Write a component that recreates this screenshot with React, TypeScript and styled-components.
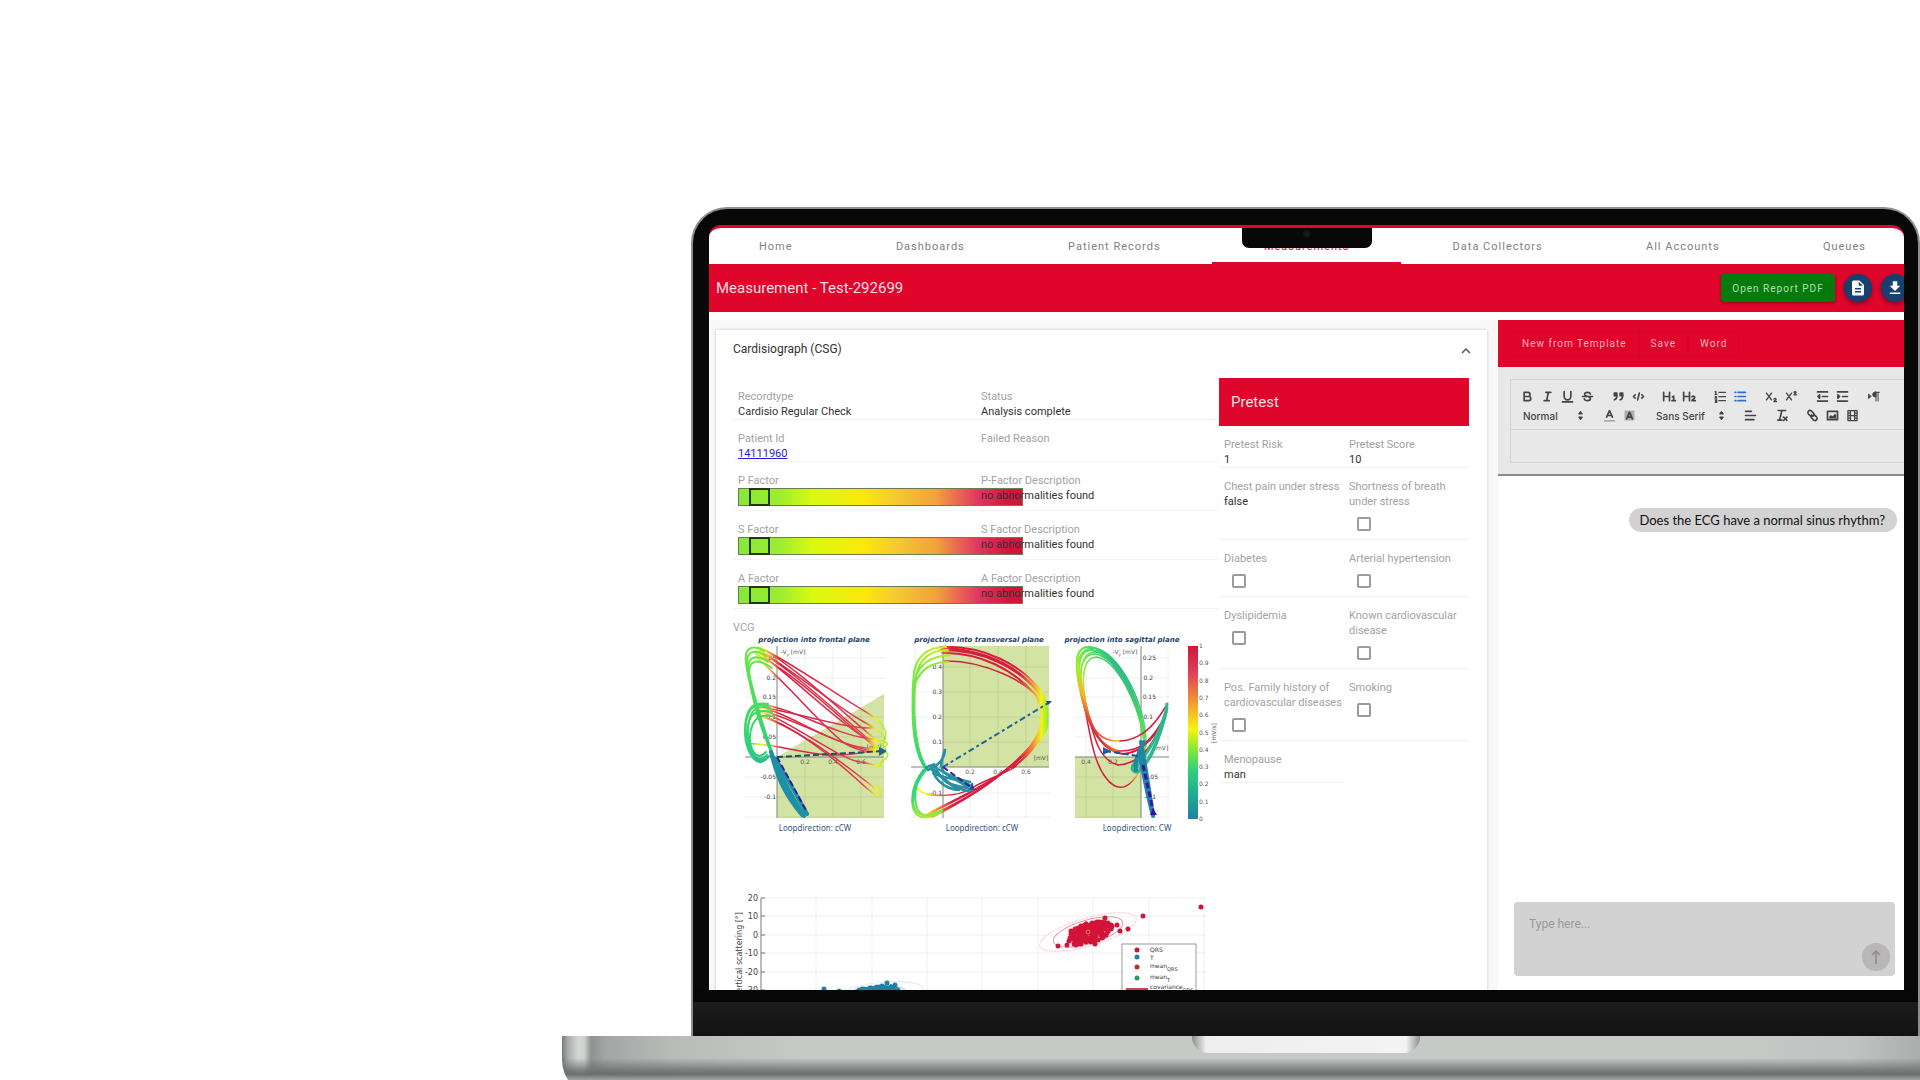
import React from 'react';
import styled, { createGlobalStyle } from 'styled-components';

interface IField {
  label: string;
  value?: string;
  link?: boolean;
  check?: boolean;
}

const RED = '#df052b';
const LOOP_COLORS = ['#d81e3f', '#e04f6a', '#f08a3c', '#f6f410', '#6fe83a', '#2fd07c', '#1f8fa0'];

const GlobalStyle = createGlobalStyle`
  *, *::before, *::after {
    box-sizing: border-box;
  }

  body {
    margin: 0;
    background: #fff;
    font-family: Roboto, "Noto Sans", sans-serif;
    color: #333;
  }

  button, select, textarea, input {
    font-family: inherit;
    margin: 0;
  }
`;

/* laptop */

const Page = styled.main`
  display: flex;
  flex-direction: column;
  height: 100vh;
  padding: 207px 0 0 562px;
  overflow: hidden;
`;

const Lid = styled.div`
  flex: 1;
  min-height: 0;
  display: flex;
  flex-direction: column;
  margin-left: 129px;
  padding: 16px 14px 0 16px;
  background: #080808;
  border: 2px solid #8d8f8e;
  border-bottom: 0;
  border-radius: 36px 36px 0 0;
`;

const Screen = styled.div`
  flex: 1;
  min-height: 0;
  position: relative;
  display: flex;
  flex-direction: column;
  overflow: hidden;
  background: #fff;
  border-top: 3px solid ${RED};
  border-radius: 12px 12px 0 0;
`;

const Notch = styled.div`
  position: absolute;
  top: -3px;
  left: 50%;
  width: 130px;
  height: 23px;
  margin-left: -65px;
  display: flex;
  align-items: center;
  justify-content: center;
  padding-bottom: 6px;
  background: #080808;
  border-radius: 0 0 7px 7px;

  &::after {
    content: '';
    width: 8px;
    height: 8px;
    border: 2px solid #141414;
    background: #1d1d1d;
    border-radius: 50%;
  }
`;

const Chin = styled.div`
  height: 46px;
  margin: 0 -14px 0 -16px;
  border-top: 12px solid #070707;
  background: linear-gradient(#1c1c1c, #131313);
`;

const Base = styled.div`
  flex: none;
  height: 60px;
  margin-bottom: -16px;
  display: flex;
  justify-content: center;
  padding-left: 130px;
  border-radius: 0 0 0 36px;
  background:
    linear-gradient(#fff0 22px, #6b6e6dcc 34px, #6b6e6d 38px, #a3a3a3 44px),
    linear-gradient(90deg, #777a78 0, #a9acaa 6px, #d5d7d5 16px, #d0d2d0 22px, #8f9290 29px, #a3a6a4 44px, #b9bbb9 110px, #c7c9c7 240px, #c7c9c7 1180px, #bfc3c1 1290px, #a9adab 1360px);
`;

const Groove = styled.div`
  width: 228px;
  height: 17px;
  border-radius: 0 0 16px 16px;
  background: linear-gradient(90deg, #8d8f8e, #eee 14px, #f3f3f3 214px, #8d8f8e);
`;

/* application bars */

const Nav = styled.nav`
  flex: none;
  display: flex;
  justify-content: space-between;
  padding: 0 38px 0 50px;
  height: 36px;
`;

const NavLink = styled.a<{ $active?: boolean }>`
  position: relative;
  height: 36px;
  line-height: 38px;
  font-size: 11px;
  letter-spacing: 1px;
  text-decoration: none;
  color: ${p => (p.$active ? RED : '#808080')};

  &::after {
    content: '';
    display: ${p => (p.$active ? 'block' : 'none')};
    position: absolute;
    left: -52px;
    right: -52px;
    bottom: 0;
    height: 2px;
    background: ${RED};
  }
`;

const TitleBar = styled.header`
  flex: none;
  display: flex;
  align-items: center;
  height: 48px;
  padding-left: 7px;
  color: #fff;
  background: ${RED};
`;

const Title = styled.h1`
  flex: 1;
  margin: 0;
  font-size: 15px;
  font-weight: 400;
  color: #fbdfe4;
`;

const Actions = styled.div`
  display: flex;
  align-items: center;
  gap: 9px;
  margin-right: -5px;
`;

const ReportButton = styled.button`
  width: 114px;
  height: 28px;
  padding: 0;
  border: 0;
  border-radius: 3px;
  background: #067a0c;
  color: #b5e0b0;
  font-size: 10px;
  letter-spacing: 1px;
  box-shadow: 0 1px 3px #0006;
`;

const RoundButton = styled.button`
  width: 28px;
  height: 28px;
  padding: 5px;
  border: 0;
  border-radius: 50%;
  background: #17406f;
  color: #fff;
  box-shadow: 0 2px 4px #0006;

  svg {
    display: block;
    width: 18px;
    height: 18px;
  }
`;

const Columns = styled.div`
  flex: 1;
  min-height: 0;
  display: grid;
  grid-template-columns: 789fr 406fr;
  padding-top: 8px;
`;

/* measurement card */

const LeftPane = styled.div`
  min-height: 0;
  padding: 10px 11px 0 7px;
  background: #f8f8f8;
`;

const Card = styled.section`
  height: 100%;
  padding: 0 18px 0 17px;
  background: #fff;
  box-shadow: 0 0 3px #0003;
`;

const CardHeader = styled.div`
  display: flex;
  align-items: center;
  justify-content: space-between;
  height: 48px;
  padding-bottom: 10px;

  h2 {
    margin: 0;
    font-size: 12px;
    font-weight: 400;
  }
`;

const Toggle = styled.button`
  width: 12px;
  height: 12px;
  margin-top: 4px;
  margin-right: -3px;
  padding: 0;
  border: 0;
  background: none;
  color: #555;

  svg {
    display: block;
  }
`;

const CardBody = styled.div`
  display: grid;
  grid-template-columns: 486fr 250fr;
`;

const Row = styled.div<{ $half?: boolean }>`
  display: grid;
  grid-template-columns: ${p => (p.$half ? '1fr' : '1fr 1fr')};
  width: ${p => (p.$half ? '50%' : 'auto')};
  border-bottom: 1px solid #f3f3f3;
`;

const Cell = styled.div<{ $tall?: boolean }>`
  min-width: 0;
  height: ${p => (p.$tall ? '48px' : 'auto')};
  padding: 11px 0 0 5px;
  font-size: 11px;
  line-height: 15px;
`;

const Label = styled.label`
  display: block;
  min-height: 15px;
  color: #a2a2a2;
`;

const Value = styled.div`
  position: relative;
  min-height: 15px;
  color: #333;

  a {
    color: #2222dd;
  }
`;

const CheckBox = styled.input`
  display: block;
  appearance: none;
  width: 14px;
  height: 14px;
  && {
    margin: 8px;
  }
  border: 2px solid #9b9b9b;
  border-radius: 2px;
  background: #fff;
`;

const Scale = styled.div`
  width: 285px;
  height: 18px;
  padding-left: 10px;
  border: 1px solid #6f7a4c;
  background: linear-gradient(90deg, #86e83c 0, #9bec30 14%, #d8fa12 26%, #fae80c 44%, #f6c832 56%, #f0a13c 70%, #ea6a54 77%, #dc3560 85%, #d3143a 96%);
`;

const Marker = styled.div`
  width: 21px;
  height: 18px;
  margin-top: -1px;
  border: 2px solid #23380f;
`;

const Caption = styled.div`
  padding-top: 11px;
  font-size: 11px;
  line-height: 15px;
  color: #a2a2a2;
`;

const Figure = styled.svg`
  display: block;
  width: 100%;
  overflow: visible;
  font-family: "DejaVu Sans", sans-serif;
`;

const PretestTitle = styled.h3`
  margin: 0;
  padding-left: 12px;
  line-height: 48px;
  font-size: 15px;
  font-weight: 400;
  color: #fbdfe4;
  background: ${RED};
`;

/* report editor and chat */

const RightPane = styled.div`
  min-height: 0;
  min-width: 0;
  display: flex;
  flex-direction: column;
`;

const EditorBar = styled.div`
  flex: none;
  display: flex;
  align-items: center;
  height: 47px;
  padding-left: 12px;
  background: ${RED};
`;

const BarButton = styled.button`
  height: 26px;
  padding: 0 11px;
  border: 1px solid #d9042a;
  background: none;
  color: #f9b3bf;
  font-size: 10px;
  letter-spacing: 1px;
`;

const EditorArea = styled.div`
  flex: none;
  padding: 12px 0 11px 12px;
  background: #e8e8e8;
  border-bottom: 2px solid #8b8b8b;
`;

const EditorBox = styled.div`
  border: 1px solid #d2d4d5;
  border-right: 0;
`;

const Tools = styled.div`
  height: 50px;
  padding: 7px 0 0 6px;
  border-bottom: 1px solid #d2d4d5;
`;

const ToolLine = styled.div`
  display: flex;
  gap: 11px;
  height: 19px;
`;

const ToolGroup = styled.div`
  display: flex;
  align-items: center;
`;

const Tool = styled.button<{ $on?: boolean }>`
  width: 20px;
  height: 19px;
  padding: 2px 3px;
  border: 0;
  background: none;
  color: ${p => (p.$on ? '#2a6fd0' : '#444')};

  svg {
    display: block;
    width: 15px;
    height: 15px;
  }
`;

const PickerBox = styled.label<{ $width: number }>`
  display: flex;
  align-items: center;
  width: ${p => p.$width}px;
  padding-left: 6px;
  color: #444;

  svg {
    width: 15px;
    height: 15px;
  }
`;

const Picker = styled.select`
  flex: 1;
  min-width: 0;
  appearance: none;
  padding: 0;
  border: 0;
  background: none;
  color: #444;
  font-family: Inter, sans-serif;
  font-size: 10px;
  font-weight: 500;
`;

const EditorText = styled.textarea`
  display: block;
  width: 100%;
  height: 32px;
  padding: 6px;
  border: 0;
  resize: none;
  background: none;
`;

const Chat = styled.div`
  flex: 1;
  min-height: 0;
  display: flex;
  flex-direction: column;
  justify-content: space-between;
  padding: 32px 9px 14px 16px;
`;

const Bubble = styled.p`
  align-self: flex-end;
  margin: 0 -2px 0 0;
  padding: 0 12px 0 10px;
  border-radius: 12px;
  line-height: 24px;
  font-family: Lato, sans-serif;
  font-size: 13px;
  color: #111;
  background: #d2d2d2;
`;

const Prompt = styled.div`
  display: flex;
  align-items: flex-end;
  height: 74px;
  padding: 5px;
  border-radius: 4px;
  background: #d2d2d2;
`;

const PromptText = styled.textarea`
  flex: 1;
  align-self: stretch;
  padding: 10px;
  border: 0;
  resize: none;
  background: none;
  font-size: 12px;

  &::placeholder {
    color: #999;
  }
`;

const SendButton = styled.button`
  width: 28px;
  height: 28px;
  padding: 6px;
  border: 0;
  border-radius: 50%;
  background: #b8b6b6;
  color: #8d8b8b;

  svg {
    display: block;
  }
`;

const navItems = ['Home', 'Dashboards', 'Patient Records', 'Measurements', 'Data Collectors', 'All Accounts', 'Queues'];

const recordRows: IField[][] = [
  [{ label: 'Recordtype', value: 'Cardisio Regular Check' }, { label: 'Status', value: 'Analysis complete' }],
  [{ label: 'Patient Id', value: '14111960', link: true }, { label: 'Failed Reason' }],
];

const factorRows = [
  ['P Factor', 'P-Factor Description'],
  ['S Factor', 'S Factor Description'],
  ['A Factor', 'A Factor Description'],
];

const pretestRows: IField[][] = [
  [{ label: 'Pretest Risk', value: '1' }, { label: 'Pretest Score', value: '10' }],
  [{ label: 'Chest pain under stress', value: 'false' }, { label: 'Shortness of breath under stress', check: true }],
  [{ label: 'Diabetes', check: true }, { label: 'Arterial hypertension', check: true }],
  [{ label: 'Dyslipidemia', check: true }, { label: 'Known cardiovascular disease', check: true }],
  [{ label: 'Pos. Family history of cardiovascular diseases', check: true }, { label: 'Smoking', check: true }],
  [{ label: 'Menopause', value: 'man' }],
];

const Field = ({ label, value, link, check }: IField) => {
  const id = label.toLowerCase().replace(/\W+/g, '-');

  return (
    <Cell>
      <Label as={check ? 'label' : 'div'} {...(check ? { htmlFor: id } : {})}>{label}</Label>
      {check
        ? <CheckBox type="checkbox" id={id} />
        : <Value>{link ? <a href="#patient">{value}</a> : value}</Value>}
    </Cell>
  );
};

/* toolbar glyphs on an 18 unit grid */

const glyphs: { [key: string]: React.ReactNode } = {
  bold: <path d="M5 4h4.500a2.500 2.500 0 0 1 0 5H5zM5 9h5.500a2.500 2.500 0 0 1 0 5H5z" />,
  italic: <path d="M7 4h6M5 14h6M8 14l2-10" />,
  underline: <path d="M5 3v6a4 4 0 0 0 8 0V3M3 15.500h12" />,
  strike: <path d="M12.500 6C12 4.500 10.500 4 9 4 7 4 5.500 5 5.500 6.500 5.500 9 12.500 8.500 12.500 11.500 12.500 13 11 14 9 14s-3.500-.8-3.800-2.200M3 9h12" />,
  quote: (
    <>
      <path d="M4 5h3v3H4zM11 5h3v3h-3z" fill="currentColor" />
      <path d="M7 8c0 4-3 5-3 5M14 8c0 4-3 5-3 5" />
    </>
  ),
  code: <path d="M5 7L3 9l2 2M13 7l2 2-2 2M10 5L8 13" />,
  h1: <path d="M2 4v10M9 4v10M2 9h7M12.500 9.500L14 8.500V14M12 14h4" />,
  h2: <path d="M2 4v10M9 4v10M2 9h7M12 9.500c.8-1.500 3.500-1 3.300.7C15 12 12 12.500 12 14h4" />,
  ordered: <path d="M7 4h8M7 9h8M7 14h8M2.500 3.500l1-.5v3.500M2.500 6.500h2.200M2.500 9h1.800l-1.800 2h2M2.500 13h2v3h-2M3 14.500h1.500" strokeWidth="1.500" />,
  bullet: <path d="M6 4h9M6 9h9M6 14h9M2.500 4h1M2.500 9h1M2.500 14h1" />,
  sub: <path d="M3 5l6 8M9 5l-6 8M12 12c.5-1 2.500-1 2.500.3 0 1-2.500 1.500-2.500 2.700h3" strokeWidth="1.700" />,
  sup: <path d="M3 5l6 8M9 5l-6 8M12 4c.5-1 2.500-1 2.500.3 0 1-2.500 1.500-2.500 2.700h3" strokeWidth="1.700" />,
  outdent: <path d="M3 3.500h12M3 14.500h12M9 9h6M5.500 7v4L3.500 9z" />,
  indent: <path d="M3 3.500h12M3 14.500h12M9 9h6M3.500 7v4l2-2z" />,
  rtl: (
    <>
      <path d="M3 6.500v5L6 9zM11 3.500a3 3 0 0 0 0 6h1v-6z" fill="currentColor" strokeWidth="1" />
      <path d="M11 4h5M12 4v10.500M14.500 4v10.500" strokeWidth="1.200" />
    </>
  ),
  color: (
    <>
      <path d="M5.500 11L9 3l3.500 8M6.500 9h5" />
      <path d="M3 15.500h12" opacity=".5" strokeWidth="1.500" />
    </>
  ),
  background: (
    <>
      <path d="M3 3h12v12H3z" fill="currentColor" stroke="none" opacity=".35" />
      <path d="M5.500 13L9 5l3.500 8M6.500 11h5" />
    </>
  ),
  align: <path d="M3 4h7M3 9h12M3 14h10" />,
  clean: <path d="M5 3h9M9.500 3L7 13M4.500 14.500h5M11.500 11l4 4M15.500 11l-4 4" />,
  link: <path d="M8 10.500l3-3M6.500 9.500L4 7a2.500 2.500 0 0 1 3.500-3.500l2.500 2.500a2.500 2.500 0 0 1 0 3.500M11.500 8.500L14 11a2.500 2.500 0 0 1-3.500 3.500L8 12a2.500 2.500 0 0 1 0-3.500" />,
  image: (
    <>
      <path d="M3 4h12v10H3z" />
      <path d="M5 12.500v-2l2-2 2 1.500 3-3 1.500 1.500v4z" fill="currentColor" stroke="none" />
    </>
  ),
  video: <path d="M3.500 3h11v12h-11zM6.500 3v12M11.500 3v12M6.500 9h5M3.500 6h3M3.500 9h3M3.500 12h3M11.500 6h3M11.500 9h3M11.500 12h3" strokeWidth="1.500" />,
  arrows: <path d="M7 7l2-2.500L11 7zM7 11l2 2.500L11 11z" fill="currentColor" strokeWidth="1.500" />,
};

const Glyph = ({ name }: { name: string }) => (
  <svg viewBox="0 0 18 18" fill="none" stroke="currentColor" strokeWidth="2" strokeLinecap="round" strokeLinejoin="round">
    {glyphs[name]}
  </svg>
);

const Group = ({ names }: { names: string[] }) => (
  <ToolGroup>
    {names.map(name => (
      <Tool key={name} type="button" aria-label={name} $on={name === 'bullet'}><Glyph name={name} /></Tool>
    ))}
  </ToolGroup>
);

/* vector cardiogram: drawn in one shared coordinate space */

const frontalLeft = [
  'M775 762C766 740 748 685 746 662C744 646 754 645 764 651',
  'M774 760C764 735 750 690 747 664C746 650 756 649 766 656',
  'M777 764C765 735 752 690 748 668C748 655 758 655 768 662',
  'M775 760C764 738 751 700 749 672C749 660 758 658 772 668',
];

const frontalRight = [
  'M758 647C775 652 840 697 866 712S886 738 883 745',
  'M760 648C790 662 842 712 868 733S884 748 882 752',
  'M758 651C790 668 840 715 866 737S884 750 881 756',
  'M756 654C792 672 834 712 862 736S882 752 878 752',
  'M760 650C800 676 838 708 864 722S884 738 884 744',
  'M758 652C796 680 842 726 872 742',
  'M756 657C788 684 830 735 846 744S874 752 882 752',
];

const midLeft = [
  'M768 757C757 772 744 750 745 728C746 706 754 702 768 704',
  'M767 755C755 768 747 745 748 728C750 708 757 705 770 708',
  'M769 756C758 770 746 748 747 733C748 712 757 709 772 712',
  'M766 752C755 764 749 745 750 735C752 718 760 714 772 716',
  'M767 758C752 768 744 742 746 722C749 706 756 703 768 706',
];

const midRight = [
  'M756 704C790 706 830 733 866 738S882 745 880 752',
  'M756 706C788 712 830 744 866 748S884 758 880 764',
  'M756 709C790 716 834 744 872 751',
  'M758 711C790 720 836 758 860 762S882 768 880 764',
  'M756 714C790 722 836 760 862 784S880 788 878 788',
  'M760 716C792 726 828 752 858 775S876 792 879 786',
  'M748 744C770 742 800 754 832 755S872 748 882 750',
  'M760 707C795 712 840 728 872 728',
];

const transversalLeft = [
  'M927 769C912 752 911 700 914 672C918 652 932 647 946 647',
  'M926 768C913 750 913 700 916 676C920 656 934 650 948 650',
  'M928 770C914 752 912 704 915 680C919 662 934 656 950 655',
  'M925 768C911 748 911 706 915 684C921 668 932 662 948 662',
  'M925 769C909 785 908 815 922 817C928 818 932 817 940 813',
  'M923 770C912 788 913 812 924 815C930 816 936 813 942 810',
  'M926 770C914 784 908 806 919 814C926 818 934 815 942 811',
];

const transversalRight = [
  'M940 647C985 645 1022 666 1040 690C1056 716 1046 738 1018 760C990 785 965 800 930 816',
  'M942 649C986 649 1020 670 1039 692C1054 718 1044 736 1014 763C988 786 962 802 932 817',
  'M940 650C985 650 1018 668 1038 692C1052 718 1042 740 1010 767C985 786 960 798 930 813',
  'M942 653C980 652 1014 670 1036 695C1050 722 1038 744 1008 769C980 789 958 798 928 814',
  'M944 648C992 650 1024 672 1042 696C1054 720 1042 746 1012 768',
];

const transversalThin = [
  'M944 661C980 660 1030 680 1043 705S1040 740 1024 756',
  'M917 788C926 800 960 796 972 788S1010 772 1016 766',
];

const sagittalUpper = [
  'M1145 750C1146 712 1120 650 1090 647C1074 646 1074 665 1082 698C1090 730 1100 746 1118 751',
  'M1146 746C1143 708 1118 653 1092 650C1077 650 1076 670 1085 702C1094 738 1104 750 1122 754',
  'M1144 742C1140 705 1118 657 1095 654C1080 654 1076 678 1084 706C1092 732 1102 742 1120 741',
  'M1143 736C1138 702 1116 660 1097 657C1082 657 1080 682 1088 712',
  'M1146 742C1146 705 1118 648 1092 648C1074 650 1075 672 1084 705C1090 730 1092 760 1106 778C1120 796 1132 785 1140 770',
  'M1145 745C1142 710 1116 656 1096 652C1079 652 1078 676 1086 706C1094 736 1098 760 1118 765',
];

const sagittalLower = [
  'M1120 741C1138 740 1152 730 1166 706',
  'M1118 751C1140 752 1152 742 1167 712',
  'M1122 754C1146 752 1158 732 1166 716',
  'M1118 765C1142 764 1156 742 1167 709',
  'M1116 752C1138 760 1150 738 1164 722',
];

const Stops = ({ colors }: { colors: [number, string][] }) => (
  <>
    {colors.map(([at, color]) => <stop key={at} offset={at} stopColor={color} />)}
  </>
);

const Loops = ({ paths, stroke, width = 1 }: { paths: string[]; stroke: string; width?: number }) => (
  <g fill="none" stroke={stroke} strokeWidth={width} strokeLinecap="round">
    {paths.map((d, i) => <path key={i} d={d} />)}
  </g>
);

const Lines = ({ xs, ys, box }: { xs: number[]; ys: number[]; box: number[] }) => (
  <g stroke="#00000010" strokeWidth="1">
    {xs.map(x => <line key={x} x1={x} x2={x} y1={box[1]} y2={box[3]} />)}
    {ys.map(y => <line key={y} y1={y} y2={y} x1={box[0]} x2={box[2]} />)}
  </g>
);

const Vcg = () => (
  <Figure viewBox="733 635 486 225">
    <defs>
      <linearGradient id="bar" x1="0" x2="0" y1="0" y2="1">
        <Stops colors={[[0, '#d3143a'], [0.15, '#dc4058'], [0.3, '#f08a3c'], [0.48, '#f8f410'], [0.6, '#7fea3a'], [0.72, '#2fd07c'], [0.85, '#22ac94'], [1, '#1f82a0']]} />
      </linearGradient>
      <linearGradient id="down" gradientUnits="userSpaceOnUse" x1="0" x2="0" y1="648" y2="770">
        <Stops colors={[[0, LOOP_COLORS[4]], [0.3, '#4fe05a'], [0.85, LOOP_COLORS[5]], [1, '#22ac94']]} />
      </linearGradient>
      <linearGradient id="swing" gradientUnits="userSpaceOnUse" x1="0" x2="0" y1="648" y2="818">
        <Stops colors={[[0, '#c8f020'], [0.12, '#7fea3a'], [0.5, '#4fe05a'], [0.7, '#2fd07c'], [0.88, '#3cd872'], [1, '#a5ec30']]} />
      </linearGradient>
      <linearGradient id="across" gradientUnits="userSpaceOnUse" x1="754" x2="885" y1="0" y2="0">
        <Stops colors={[[0, LOOP_COLORS[4]], [0.06, LOOP_COLORS[3]], [0.13, LOOP_COLORS[2]], [0.2, LOOP_COLORS[0]], [0.84, '#dc4058'], [0.93, LOOP_COLORS[3]], [1, '#a5ec30']]} />
      </linearGradient>
      <linearGradient id="round" gradientUnits="userSpaceOnUse" x1="925" x2="1050" y1="0" y2="0">
        <Stops colors={[[0, LOOP_COLORS[3]], [0.1, LOOP_COLORS[2]], [0.22, LOOP_COLORS[0]], [0.76, LOOP_COLORS[0]], [0.86, LOOP_COLORS[2]], [0.93, LOOP_COLORS[3]], [1, LOOP_COLORS[4]]]} />
      </linearGradient>
      <linearGradient id="side" gradientUnits="userSpaceOnUse" x1="1076" x2="1142" y1="735" y2="690">
        <Stops colors={[[0, LOOP_COLORS[0]], [0.2, LOOP_COLORS[0]], [0.35, '#f0b428'], [0.48, '#a5ec30'], [0.75, '#4fe05a'], [1, '#22a898']]} />
      </linearGradient>
    </defs>

    <g fill="#d2e3a3">
      <path d="M777 757L884 694V818H777z" />
      <path d="M943 646H1049V767H943z" />
      <path d="M1075 757H1141V818H1075z" />
    </g>
    <Lines xs={[805, 833, 861]} ys={[658, 678, 697, 717, 737, 777, 797, 817]} box={[745, 646, 886, 818]} />
    <Lines xs={[915, 970, 998, 1026]} ys={[667, 692, 717, 742, 793, 817]} box={[911, 646, 1051, 818]} />
    <Lines xs={[1086, 1113, 1168]} ys={[658, 678, 697, 717, 737, 777, 797, 817]} box={[1075, 646, 1169, 818]} />
    <path d="M777 646V818M745 757H884M943 646V818M911 767H1049M1141 646V818M1075 757H1169" stroke="#7d8478" strokeWidth="1" fill="none" />

    <g fontSize="6" fill="#444" textAnchor="end">
      <text x="776" y="660">0.25</text><text x="776" y="680">0.2</text><text x="776" y="699">0.15</text>
      <text x="776" y="719">0.1</text><text x="776" y="739">0.05</text><text x="776" y="779">-0.05</text><text x="776" y="799">-0.1</text>
      <text x="942" y="669">0.4</text><text x="942" y="694">0.3</text><text x="942" y="719">0.2</text>
      <text x="942" y="744">0.1</text><text x="942" y="795">-0.1</text>
      <text x="1156" y="660">0.25</text><text x="1153" y="680">0.2</text><text x="1156" y="699">0.15</text>
      <text x="1153" y="719">0.1</text><text x="1158" y="779">-0.05</text><text x="1156" y="799">-0.1</text>
    </g>
    <g fontSize="6" fill="#555" textAnchor="middle">
      <text x="805" y="764">0.2</text><text x="833" y="764">0.4</text><text x="861" y="764">0.6</text>
      <text x="970" y="774">0.2</text><text x="998" y="774">0.4</text><text x="1026" y="774">0.6</text>
      <text x="1086" y="764">0.4</text><text x="1113" y="764">0.2</text>
      <text x="1161" y="750">[mV]</text><text x="1041" y="760">[mV]</text><text x="874" y="749">[mV]</text>
      <text x="793" y="654">-V<tspan dy="2" fontSize="4">y</tspan><tspan dy="-2"> [mV]</tspan></text>
      <text x="1125" y="654">-V<tspan dy="2" fontSize="4">y</tspan><tspan dy="-2"> [mV]</tspan></text>
    </g>

    <Loops paths={frontalRight} stroke="url(#across)" width={1.5} />
    <Loops paths={midRight} stroke="url(#across)" width={1.5} />
    <Loops paths={frontalLeft} stroke="url(#down)" width={2} />
    <Loops paths={midLeft} stroke="url(#down)" width={2} />
    <Loops paths={['M774 758C782 780 794 800 804 816', 'M771 752C778 782 788 798 802 815', 'M776 760C790 782 798 798 807 814']} stroke="#1f8fa6" width={4} />
    <path d="M777 757L807 812" stroke="#3a1a9c" strokeWidth="2" strokeDasharray="6 3" />
    <path d="M777 757L884 751" stroke="#1f4f66" strokeWidth="2" strokeDasharray="6 3" />
    <path d="M879 747l8 4-8 5z" fill="#1f5fa0" />

    <Loops paths={transversalRight} stroke="url(#round)" width={2} />
    <Loops paths={transversalThin} stroke="url(#round)" width={1.5} />
    <Loops paths={transversalLeft} stroke="url(#swing)" width={2} />
    <Loops
      paths={[
        'M926 768C935 760 940 772 935 774C948 780 962 778 972 787', 'M930 766C938 772 942 782 958 788S972 790 972 784',
        'M928 770C942 764 945 755 945 749C942 760 938 768 946 774S966 784 970 790', 'M934 764C928 774 944 790 960 790C950 786 944 776 932 770',
        'M936 768C950 776 960 780 970 782', 'M938 772C946 786 952 784 966 788',
      ]}
      stroke="#2790a2"
      width={2.5}
    />
    <path d="M943 767L1050 702" stroke="#1f659c" strokeWidth="2" strokeDasharray="6 3 3 3" />
    <path d="M943 767L972 788" stroke="#3a1a9c" strokeWidth="2" strokeDasharray="6 3" />
    <path d="M1046 701l6 0-4 4zM969 790l3-6 3 5z" fill="#2a3fa8" />

    <Loops paths={sagittalUpper} stroke="url(#side)" width={1.5} />
    <Loops paths={sagittalUpper.slice(0, 2)} stroke="url(#side)" width={2} />
    <Loops paths={sagittalLower} stroke={LOOP_COLORS[0]} width={1.5} />
    <Loops paths={['M1167 704C1164 728 1150 762 1138 772C1128 774 1132 758 1142 762', 'M1167 708C1160 738 1150 764 1140 768', 'M1165 714C1158 738 1146 754 1136 768']} stroke="#2fb88c" width={3} />
    <Loops paths={['M1141 742C1146 770 1150 795 1153 816', 'M1139 750C1144 775 1146 790 1152 812', 'M1144 742C1140 752 1134 760 1136 770']} stroke="#1f86a4" width={4} />
    <path d="M1105 751L1138 756" stroke="#1f4f96" strokeWidth="2" strokeDasharray="6 3" />
    <path d="M1103 747l8 4-8 4z" fill="#1f5fa0" />
    <path d="M1143 765L1153 810" stroke="#3a0fae" strokeWidth="3" strokeDasharray="6 3" />
    <path d="M1150 815l3-7 4 7z" fill="#3a0fae" />

    <rect x="1188" y="646" width="10" height="173" fill="url(#bar)" />
    <g fontSize="6" fill="#555">
      {['1', '0.9', '0.8', '0.7', '0.6', '0.5', '0.4', '0.3', '0.2', '0.1', '0'].map((t, i) => (
        <text key={t} x="1199" y={648 + i * 17.3}>{t}</text>
      ))}
      <text transform="translate(1216 733) rotate(-90)" textAnchor="middle">[mV/s]</text>
    </g>

    <g fontSize="7" fontWeight="700" fontStyle="italic" fill="#1c3f6e" textAnchor="middle">
      <text x="814" y="642">projection into frontal plane</text>
      <text x="979" y="642">projection into transversal plane</text>
      <text x="1122" y="642">projection into sagittal plane</text>
    </g>
    <g fontSize="8" fontFamily="Noto Sans" fill="#35567f" textAnchor="middle">
      <text x="815" y="831">Loopdirection: cCW</text>
      <text x="982" y="831">Loopdirection: cCW</text>
      <text x="1137" y="831">Loopdirection: CW</text>
    </g>
  </Figure>
);

/* repeatable noise for the scatter clouds */
const cloud = (count: number, cx: number, cy: number, rx: number, ry: number, tilt: number) => {
  let seed = 7;
  const next = () => {
    seed = (seed * 16807) % 2147483647;
    return seed / 2147483647;
  };

  return Array.from({ length: count }, () => {
    const angle = next() * Math.PI * 2;
    const r = Math.sqrt(next());
    const dx = Math.cos(angle) * r * rx;
    return [Math.round(cx + dx), Math.round(cy + Math.sin(angle) * r * ry - dx * tilt)];
  });
};

const qrs = [[1201, 907], [1143, 916], [1105, 918], [1128, 929], [1120, 931], [1117, 925], [1058, 946], [1067, 945], [1076, 945], [1095, 944], ...cloud(170, 1089, 933, 23, 10, 0.25)];
const tWave = [[824, 989], [839, 991], [887, 983], [895, 985], ...cloud(120, 874, 993, 24, 6, 0.12)];

const Scatter = () => (
  <Figure viewBox="733 860 486 160">
    <Lines xs={[816, 872, 927, 982, 1038, 1093, 1149, 1204]} ys={[898, 916, 935, 953, 972, 990]} box={[761, 898, 1206, 1010]} />
    <path d="M765 898H761V1010M761 916h4M761 935h4M761 953h4M761 972h4M761 990h4" fill="none" stroke="#777" />
    <g fontSize="8" fill="#444" textAnchor="end">
      <text x="758" y="901">20</text><text x="758" y="919">10</text><text x="758" y="938">0</text>
      <text x="758" y="956">-10</text><text x="758" y="975">-20</text><text x="758" y="993">-30</text>
      <text transform="translate(742 912) rotate(-90)">vertical scattering [°]</text>
    </g>
    <g fill="none" strokeWidth="1">
      <ellipse cx="1088" cy="932" rx="36" ry="12" transform="rotate(-16 1088 932)" stroke="#e39aa8" />
      <ellipse cx="1088" cy="932" rx="50" ry="14" transform="rotate(-16 1088 932)" stroke="#f2c6ce" strokeDasharray="2 1" />
      <ellipse cx="872" cy="996" rx="34" ry="9" transform="rotate(-8 872 996)" stroke="#a8cfd6" />
      <ellipse cx="876" cy="996" rx="48" ry="13" transform="rotate(-8 876 996)" stroke="#dfe9ea" />
    </g>
    <g fill="#d3143a">{qrs.map(([x, y], i) => <circle key={i} cx={x} cy={y} r="2.500" />)}</g>
    <g fill="#1f82a0">{tWave.map(([x, y], i) => <circle key={i} cx={x} cy={y} r="2.500" />)}</g>
    <circle cx="1088" cy="932" r="2" fill="#d3143a" stroke="#e87a3a" />
    <rect x="1122" y="944" width="74" height="80" fill="#fff" stroke="#999" />
    <circle cx="1137" cy="950" r="2.500" fill="#c3143a" />
    <circle cx="1137" cy="957" r="2.500" fill="#1f82a0" />
    <circle cx="1137" cy="967" r="2.500" fill="#b8321c" />
    <circle cx="1137" cy="978" r="2.500" fill="#2f9a5c" />
    <path d="M1126 989h22" stroke="#d0405c" strokeWidth="2" />
    <g fontSize="6" fill="#333">
      <text x="1150" y="952">QRS</text>
      <text x="1150" y="960">T</text>
      <text x="1150" y="968">mean<tspan dy="3" fontSize="5">QRS</tspan></text>
      <text x="1150" y="979">mean<tspan dy="3" fontSize="5">T</tspan></text>
      <text x="1150" y="989">covariance<tspan dy="3" fontSize="5">QRS</tspan></text>
    </g>
  </Figure>
);

const App = () => (
  <>
    <GlobalStyle />
    <Page>
      <Lid>
        <Screen>
          <Nav>
            {navItems.map(item => (
              <NavLink key={item} href="#nav" $active={item === 'Measurements'}>{item}</NavLink>
            ))}
          </Nav>
          <TitleBar>
            <Title>Measurement - Test-292699</Title>
            <Actions>
              <ReportButton type="button">Open Report PDF</ReportButton>
              <RoundButton type="button" aria-label="Report">
                <svg viewBox="0 0 24 24" fill="currentColor">
                  <path d="M14 2H6a2 2 0 0 0-2 2v16a2 2 0 0 0 2 2h12a2 2 0 0 0 2-2V8zm2 16H8v-2h8zm0-4H8v-2h8zm-3-5V3.500L18.500 9z" />
                </svg>
              </RoundButton>
              <RoundButton type="button" aria-label="Download">
                <svg viewBox="0 0 24 24" fill="currentColor"><path d="M19 9h-4V3H9v6H5l7 7zM5 18v2h14v-2z" /></svg>
              </RoundButton>
            </Actions>
          </TitleBar>

          <Columns>
            <LeftPane>
              <Card>
                <CardHeader>
                  <h2>Cardisiograph (CSG)</h2>
                  <Toggle type="button" aria-label="Collapse">
                    <svg viewBox="0 0 12 12" width="12" height="12" fill="none" stroke="currentColor" strokeWidth="1.500"><path d="M2 8l4-4 4 4" /></svg>
                  </Toggle>
                </CardHeader>
                <CardBody>
                  <div>
                    {recordRows.map((row, i) => (
                      <Row key={i}>{row.map(field => <Field key={field.label} {...field} />)}</Row>
                    ))}
                    {factorRows.map(([name, description]) => (
                      <Row key={name}>
                        <Cell $tall>
                          <Label as="div">{name}</Label>
                          <Scale><Marker /></Scale>
                        </Cell>
                        <Cell $tall>
                          <Label as="div">{description}</Label>
                          <Value>no abnormalities found</Value>
                        </Cell>
                      </Row>
                    ))}
                    <Caption>VCG</Caption>
                    <Vcg />
                    <Scatter />
                  </div>
                  <div>
                    <PretestTitle>Pretest</PretestTitle>
                    {pretestRows.map((row, i) => (
                      <Row key={i} $half={row.length === 1}>
                        {row.map(field => <Field key={field.label} {...field} />)}
                      </Row>
                    ))}
                  </div>
                </CardBody>
              </Card>
            </LeftPane>

            <RightPane>
              <EditorBar>
                <BarButton type="button">New from Template</BarButton>
                <BarButton type="button">Save</BarButton>
                <BarButton type="button">Word</BarButton>
              </EditorBar>
              <EditorArea>
                <EditorBox>
                  <Tools>
                    <ToolLine>
                      <Group names={['bold', 'italic', 'underline', 'strike']} />
                      <Group names={['quote', 'code']} />
                      <Group names={['h1', 'h2']} />
                      <Group names={['ordered', 'bullet']} />
                      <Group names={['sub', 'sup']} />
                      <Group names={['outdent', 'indent']} />
                      <Group names={['rtl']} />
                    </ToolLine>
                    <ToolLine>
                      <PickerBox $width={71}>
                        <Picker aria-label="Paragraph style"><option>Normal</option></Picker>
                        <Glyph name="arrows" />
                      </PickerBox>
                      <Group names={['color', 'background']} />
                      <PickerBox $width={79}>
                        <Picker aria-label="Font"><option>Sans Serif</option></Picker>
                        <Glyph name="arrows" />
                      </PickerBox>
                      <Group names={['align']} />
                      <Group names={['clean']} />
                      <Group names={['link', 'image', 'video']} />
                    </ToolLine>
                  </Tools>
                  <EditorText aria-label="Report text" />
                </EditorBox>
              </EditorArea>
              <Chat>
                <Bubble>Does the ECG have a normal sinus rhythm?</Bubble>
                <Prompt>
                  <PromptText aria-label="Message" placeholder="Type here..." />
                  <SendButton type="button" aria-label="Send">
                    <svg viewBox="0 0 16 16" width="16" height="16" fill="none" stroke="currentColor" strokeWidth="1.500"><path d="M8 15V2M4 6l4-4 4 4" /></svg>
                  </SendButton>
                </Prompt>
              </Chat>
            </RightPane>
          </Columns>
          <Notch />
        </Screen>
        <Chin />
      </Lid>
      <Base><Groove /></Base>
    </Page>
  </>
);

export default App;
